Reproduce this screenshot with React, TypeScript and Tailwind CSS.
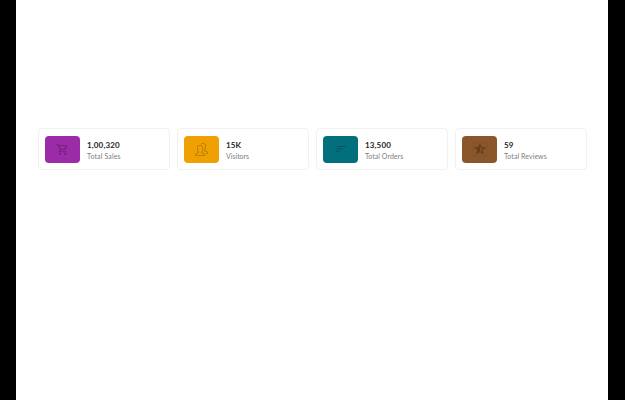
import React from "react";
import type { IconType } from "react-icons";
import { MdOutlineShoppingCart, MdOutlineSort, MdOutlineStarHalf } from "react-icons/md";
import { SlPeople } from "react-icons/sl";

interface Stat {
  value: string;
  label: string;
  tile: string;
  valueClass: string;
  labelClass: string;
  iconClass: string;
  Icon: IconType;
}

const stats: Stat[] = [
  { value: "1,00,320", label: "Total Sales", tile: "bg-[#9c2ba7]", valueClass: "tracking-[0.15px]", labelClass: "tracking-[0.13px]", iconClass: "size-[13px] text-[#74207c]", Icon: MdOutlineShoppingCart },
  { value: "15K", label: "Visitors", tile: "bg-[#efa103]", valueClass: "tracking-[0.1px]", labelClass: "tracking-[0px]", iconClass: "size-[13px] text-[#b47a05]", Icon: SlPeople },
  { value: "13,500", label: "Total Orders", tile: "bg-[#02707c]", valueClass: "tracking-[0.15px]", labelClass: "tracking-[0.04px]", iconClass: "size-[12px] text-[#03535c]", Icon: MdOutlineSort },
  { value: "59", label: "Total Reviews", tile: "bg-[#8b572a]", valueClass: "tracking-[0.1px]", labelClass: "tracking-[0.07px]", iconClass: "size-[14px] text-[#673e1c] stroke-[#673e1c] [stroke-width:0.5]", Icon: MdOutlineStarHalf },
];

function StatCard({ value, label, tile, valueClass, labelClass, iconClass, Icon }: Stat) {
  return (
    <div className="flex h-[42px] w-[132px] items-center gap-[7px] rounded-[4px] border border-[#f1f1f1] bg-white pl-[6px]">
      <div className={`flex h-[27px] w-[35px] items-center justify-center rounded-[4px] ${tile}`}>
        <Icon className={iconClass} />
      </div>
      <div className="flex flex-col whitespace-nowrap pt-[3px]">
        <span className={`text-[8px] leading-[11px] font-bold text-[#252729] ${valueClass}`}>{value}</span>
        <span className={`text-[7px] leading-[11px] text-[#808080] ${labelClass}`}>{label}</span>
      </div>
    </div>
  );
}

export default function App() {
  return (
    <div className="h-[400px] w-[625px] bg-black pr-[17px] pl-4 font-['Lato',sans-serif]">
      <main className="flex h-full items-start gap-[7px] bg-white pt-32 pl-[22px]">
        {stats.map((stat) => (
          <StatCard key={stat.label} {...stat} />
        ))}
      </main>
    </div>
  );
}
